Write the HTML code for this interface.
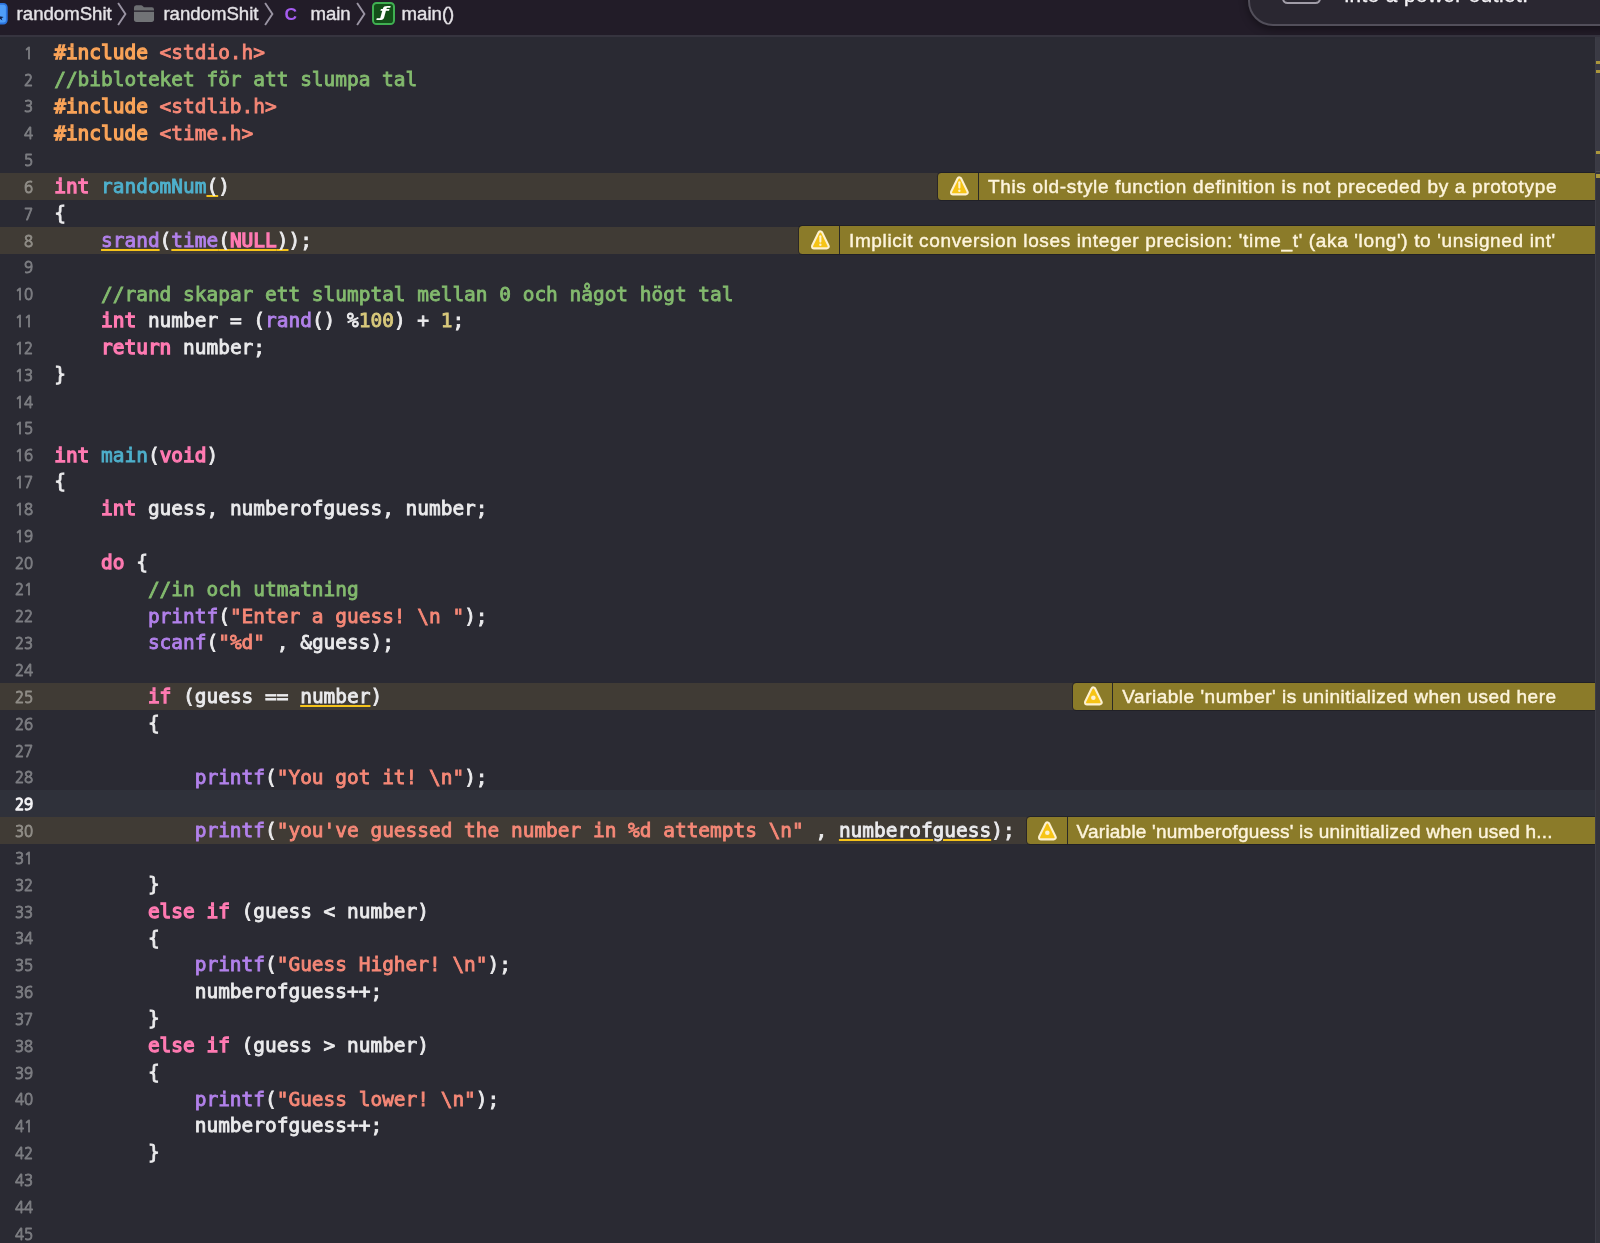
<!DOCTYPE html>
<html lang="en">
<head>
<meta charset="utf-8">
<title>main.c — randomShit</title>
<style>
html,body{margin:0;padding:0;}
body{width:1600px;height:1243px;overflow:hidden;background:#2a2a33;position:relative;font-family:"Liberation Sans",sans-serif;}
#barbg{position:absolute;left:0;top:0;width:1600px;height:35.4px;background:#221c28;}
#bar{position:absolute;left:0;top:0;width:1600px;height:35px;will-change:transform;}
#barline{position:absolute;left:0;top:35.4px;width:1600px;height:1.7px;background:#36343f;}
#bar .t{-webkit-text-stroke:0.4px;position:absolute;top:3px;font-size:18.6px;line-height:22px;color:#e4e2e6;white-space:nowrap;}
#bar svg{position:absolute;}
#bar .cc{color:#a55cf0;font-weight:bold;font-size:17.4px;top:3.2px;-webkit-text-stroke:0;}
.fbox{position:absolute;left:371.6px;top:1.7px;width:19.2px;height:19.2px;border:2px solid #40b052;border-radius:4.6px;background:#134f19;overflow:hidden;}
.fch{position:absolute;left:0;top:0;width:19.2px;text-align:center;font-family:"DejaVu Sans","Liberation Sans",sans-serif;font-style:oblique;font-weight:bold;font-size:13.8px;line-height:19.2px;color:#fff;transform:translate(0.5px,-1.1px) scaleX(1.5);}
#editor{position:absolute;left:0;top:36px;width:1600px;height:1207px;overflow:hidden;will-change:transform;}
.ln{position:absolute;left:0;width:1595px;height:26.84px;margin-top:-36px;}
.ln.w{background:#403b35;}
.ln.cur{background:#2f313a;}
.no{position:absolute;right:1562.1px;top:0.9px;line-height:27.4px;font-size:16.7px;color:#7b7c81;font-family:"NanumGothic","Liberation Sans",sans-serif;white-space:nowrap;-webkit-text-stroke:0.95px;transform:scaleX(0.9);transform-origin:100% 50%;}
.cur .no{color:#f2f2f4;-webkit-text-stroke:1.3px;}
.w .no{color:#8f8c86;}
.cd{position:absolute;left:54.2px;top:1.2px;-webkit-text-stroke:0.85px;margin:0;font-family:"DejaVu Sans Mono","Liberation Mono",monospace;font-size:19.467px;line-height:26.84px;color:#ebebed;white-space:pre;}
.cd b{font-weight:normal;-webkit-text-stroke:1.3px;}
.k{color:#ff7ab2;}
.p{color:#f9a358;}
.s{color:#f68877;}
.c{color:#83ba6e;}
.f{color:#b281eb;}
.d{color:#4eb0cc;}
.n{color:#d9c97c;}
.u{text-decoration:underline;text-decoration-color:#f5c31a;text-decoration-thickness:2.4px;text-underline-offset:2.2px;text-decoration-skip-ink:none;}
.u.g{text-decoration-skip-ink:auto;}
.wb{position:absolute;top:-0.4px;right:0;height:27.4px;background:#8b7b29;border-radius:3.5px 0 0 3.5px;box-shadow:0 0 0 1px rgba(24,24,30,.55);}
.wic{position:absolute;left:0;top:0;width:39.5px;height:100%;border-right:1.6px solid #2b2a26;}
.wi{position:absolute;left:9.4px;top:2.8px;}
.wt{position:absolute;left:49.6px;top:0.8px;line-height:27.4px;font-size:19px;color:#fdf4dc;white-space:nowrap;-webkit-text-stroke:0.45px;}
#sb{position:absolute;left:1595px;top:36.6px;width:5px;height:1207px;background:#33333c;border-left:1.4px solid #3c3c46;box-sizing:border-box;}
#sb b{position:absolute;left:0;top:0;width:5px;height:134px;background:#3a3a44;border-bottom:1.4px solid #484852;}
#sb i{position:absolute;left:0.2px;width:4px;height:3.4px;background:#ab973c;}
#note{position:absolute;left:1248.2px;top:-60px;width:420px;height:81.6px;border:2px solid #524f5a;border-radius:25px;background:#2a2731;overflow:hidden;box-shadow:0 3px 9px rgba(0,0,0,.4);}
.nic{position:absolute;left:31.6px;top:32.4px;width:35.2px;height:26px;border:2px solid #a19da8;border-radius:5.5px;}
.ntx{position:absolute;left:94.2px;top:40.8px;font-size:20.6px;line-height:24px;letter-spacing:0.5px;color:#f4f2f6;white-space:nowrap;-webkit-text-stroke:0.4px;}
</style>
</head>
<body>
<div id="barbg"></div>
<div id="bar">
<svg style="left:-16px;top:3px" width="24" height="22" viewBox="0 0 24 22"><rect x="0.9" y="0.9" width="21.9" height="19.6" rx="3.4" fill="#4f9ef8" stroke="#2c74de" stroke-width="1.8"/><path d="M15.5 13.2 L19.6 14.1 L17.6 15.2 L18.4 17.6 L15.6 15.6 Z" fill="#14224a"/></svg>
<span class="t" style="left:16.6px">randomShit</span>
<svg class="chev" style="left:116px;top:1px" width="12" height="26" viewBox="0 0 12 26"><path d="M2.1 2 L9.4 13 L2.1 24" fill="none" stroke="#9a94a3" stroke-width="1.9"/></svg>
<svg style="left:133.3px;top:4.4px" width="22.4" height="19.8" viewBox="0 0 23 19" preserveAspectRatio="none"><path d="M1 3.6 Q1 1.2 3.4 1.2 H8.2 Q9.4 1.2 10.2 2.1 L11.2 3.2 H19.4 Q21.6 3.2 21.6 5.4 V6.2 H1 Z" fill="#6c6e71"/><path d="M1 7.4 H21.6 V14.6 Q21.6 17.2 19 17.2 H3.6 Q1 17.2 1 14.6 Z" fill="#717376"/></svg>
<span class="t" style="left:163.4px">randomShit</span>
<svg class="chev" style="left:263px;top:1px" width="12" height="26" viewBox="0 0 12 26"><path d="M2.1 2 L9.4 13 L2.1 24" fill="none" stroke="#9a94a3" stroke-width="1.9"/></svg>
<span class="t cc" style="left:284.4px">C</span>
<span class="t" style="left:310.4px">main</span>
<svg class="chev" style="left:354.6px;top:1px" width="12" height="26" viewBox="0 0 12 26"><path d="M2.1 2 L9.4 13 L2.1 24" fill="none" stroke="#9a94a3" stroke-width="1.9"/></svg>
<span class="fbox"><span class="fch">ƒ</span></span>
<span class="t" style="left:401.6px">main()</span>
</div>
<div id="barline"></div>
<div id="editor">
<div class="ln" style="top:38.90px"><span class="no">1</span><pre class="cd"><b class="p">#include </b><span class="s">&lt;stdio.h&gt;</span></pre></div>
<div class="ln" style="top:65.73px"><span class="no">2</span><pre class="cd"><span class="c">//bibloteket för att slumpa tal</span></pre></div>
<div class="ln" style="top:92.57px"><span class="no">3</span><pre class="cd"><b class="p">#include </b><span class="s">&lt;stdlib.h&gt;</span></pre></div>
<div class="ln" style="top:119.41px"><span class="no">4</span><pre class="cd"><b class="p">#include </b><span class="s">&lt;time.h&gt;</span></pre></div>
<div class="ln" style="top:146.24px"><span class="no">5</span><pre class="cd"></pre></div>
<div class="ln w" style="top:173.08px"><span class="no">6</span><pre class="cd"><b class="k">int</b> <span class="d">randomNum</span><span class="u">(</span>)</pre><div class="wb" style="left:938.4px"><span class="wic"><svg class="wi" viewBox="0 0 22 22" width="22" height="22"><path d="M11.35 4.4 L17.7 17.4 H5 Z" fill="#fdf1cf" stroke="#fdf1cf" stroke-width="6" stroke-linejoin="round"/><path d="M11.35 4.4 L17.7 17.4 H5 Z" fill="#f6c416" stroke="#f6c416" stroke-width="1.9" stroke-linejoin="round"/><path d="M11.35 7.3 V12.6" stroke="#fdf1cf" stroke-width="2.1" stroke-linecap="round"/><circle cx="11.35" cy="15.7" r="1.2" fill="#fdf1cf"/></svg></span><span class="wt" style="letter-spacing:0.664px">This old-style function definition is not preceded by a prototype</span></div></div>
<div class="ln" style="top:199.91px"><span class="no">7</span><pre class="cd">{</pre></div>
<div class="ln w" style="top:226.75px"><span class="no">8</span><pre class="cd">    <span class="u"><span class="f">srand</span></span>(<span class="u"><span class="f">time</span>(<b class="k">NULL</b>)</span>);</pre><div class="wb" style="left:799.4px"><span class="wic"><svg class="wi" viewBox="0 0 22 22" width="22" height="22"><path d="M11.35 4.4 L17.7 17.4 H5 Z" fill="#fdf1cf" stroke="#fdf1cf" stroke-width="6" stroke-linejoin="round"/><path d="M11.35 4.4 L17.7 17.4 H5 Z" fill="#f6c416" stroke="#f6c416" stroke-width="1.9" stroke-linejoin="round"/><path d="M11.35 7.3 V12.6" stroke="#fdf1cf" stroke-width="2.1" stroke-linecap="round"/><circle cx="11.35" cy="15.7" r="1.2" fill="#fdf1cf"/></svg></span><span class="wt" style="letter-spacing:0.638px">Implicit conversion loses integer precision: &#x27;time_t&#x27; (aka &#x27;long&#x27;) to &#x27;unsigned int&#x27;</span></div></div>
<div class="ln" style="top:253.58px"><span class="no">9</span><pre class="cd"></pre></div>
<div class="ln" style="top:280.42px"><span class="no">10</span><pre class="cd">    <span class="c">//rand skapar ett slumptal mellan 0 och något högt tal</span></pre></div>
<div class="ln" style="top:307.25px"><span class="no">11</span><pre class="cd">    <b class="k">int</b> number = (<span class="f">rand</span>() %<span class="n">100</span>) + <span class="n">1</span>;</pre></div>
<div class="ln" style="top:334.08px"><span class="no">12</span><pre class="cd">    <b class="k">return</b> number;</pre></div>
<div class="ln" style="top:360.92px"><span class="no">13</span><pre class="cd">}</pre></div>
<div class="ln" style="top:387.75px"><span class="no">14</span><pre class="cd"></pre></div>
<div class="ln" style="top:414.59px"><span class="no">15</span><pre class="cd"></pre></div>
<div class="ln" style="top:441.43px"><span class="no">16</span><pre class="cd"><b class="k">int</b> <span class="d">main</span>(<b class="k">void</b>)</pre></div>
<div class="ln" style="top:468.26px"><span class="no">17</span><pre class="cd">{</pre></div>
<div class="ln" style="top:495.09px"><span class="no">18</span><pre class="cd">    <b class="k">int</b> guess, numberofguess, number;</pre></div>
<div class="ln" style="top:521.93px"><span class="no">19</span><pre class="cd"></pre></div>
<div class="ln" style="top:548.76px"><span class="no">20</span><pre class="cd">    <b class="k">do</b> {</pre></div>
<div class="ln" style="top:575.60px"><span class="no">21</span><pre class="cd">        <span class="c">//in och utmatning</span></pre></div>
<div class="ln" style="top:602.43px"><span class="no">22</span><pre class="cd">        <span class="f">printf</span>(<span class="s">&quot;Enter a guess! \n &quot;</span>);</pre></div>
<div class="ln" style="top:629.27px"><span class="no">23</span><pre class="cd">        <span class="f">scanf</span>(<span class="s">&quot;%d&quot;</span> , &amp;guess);</pre></div>
<div class="ln" style="top:656.11px"><span class="no">24</span><pre class="cd"></pre></div>
<div class="ln w" style="top:682.94px"><span class="no">25</span><pre class="cd">        <b class="k">if</b> (guess == <span class="u">number</span>)</pre><div class="wb" style="left:1072.7px"><span class="wic"><svg class="wi" viewBox="0 0 22 22" width="22" height="22"><path d="M11.35 4.4 L17.7 17.4 H5 Z" fill="#fdf1cf" stroke="#fdf1cf" stroke-width="6" stroke-linejoin="round"/><path d="M11.35 4.4 L17.7 17.4 H5 Z" fill="#f6c416" stroke="#f6c416" stroke-width="1.9" stroke-linejoin="round"/><circle cx="11.35" cy="12.7" r="2.3" fill="#fdf1cf"/></svg></span><span class="wt" style="letter-spacing:0.51px">Variable &#x27;number&#x27; is uninitialized when used here</span></div></div>
<div class="ln" style="top:709.77px"><span class="no">26</span><pre class="cd">        {</pre></div>
<div class="ln" style="top:736.61px"><span class="no">27</span><pre class="cd"></pre></div>
<div class="ln" style="top:763.45px"><span class="no">28</span><pre class="cd">            <span class="f">printf</span>(<span class="s">&quot;You got it! \n&quot;</span>);</pre></div>
<div class="ln cur" style="top:790.28px"><span class="no">29</span><pre class="cd"></pre></div>
<div class="ln w" style="top:817.12px"><span class="no">30</span><pre class="cd">            <span class="f">printf</span>(<span class="s">&quot;you&#x27;ve guessed the number in %d attempts \n&quot;</span> , <span class="u g">numberofguess</span>);</pre><div class="wb" style="left:1027px"><span class="wic"><svg class="wi" viewBox="0 0 22 22" width="22" height="22"><path d="M11.35 4.4 L17.7 17.4 H5 Z" fill="#fdf1cf" stroke="#fdf1cf" stroke-width="6" stroke-linejoin="round"/><path d="M11.35 4.4 L17.7 17.4 H5 Z" fill="#f6c416" stroke="#f6c416" stroke-width="1.9" stroke-linejoin="round"/><circle cx="11.35" cy="12.7" r="2.3" fill="#fdf1cf"/></svg></span><span class="wt" style="letter-spacing:0.214px">Variable &#x27;numberofguess&#x27; is uninitialized when used h...</span></div></div>
<div class="ln" style="top:843.95px"><span class="no">31</span><pre class="cd"></pre></div>
<div class="ln" style="top:870.78px"><span class="no">32</span><pre class="cd">        }</pre></div>
<div class="ln" style="top:897.62px"><span class="no">33</span><pre class="cd">        <b class="k">else</b> <b class="k">if</b> (guess &lt; number)</pre></div>
<div class="ln" style="top:924.46px"><span class="no">34</span><pre class="cd">        {</pre></div>
<div class="ln" style="top:951.29px"><span class="no">35</span><pre class="cd">            <span class="f">printf</span>(<span class="s">&quot;Guess Higher! \n&quot;</span>);</pre></div>
<div class="ln" style="top:978.12px"><span class="no">36</span><pre class="cd">            numberofguess++;</pre></div>
<div class="ln" style="top:1004.96px"><span class="no">37</span><pre class="cd">        }</pre></div>
<div class="ln" style="top:1031.80px"><span class="no">38</span><pre class="cd">        <b class="k">else</b> <b class="k">if</b> (guess &gt; number)</pre></div>
<div class="ln" style="top:1058.63px"><span class="no">39</span><pre class="cd">        {</pre></div>
<div class="ln" style="top:1085.47px"><span class="no">40</span><pre class="cd">            <span class="f">printf</span>(<span class="s">&quot;Guess lower! \n&quot;</span>);</pre></div>
<div class="ln" style="top:1112.30px"><span class="no">41</span><pre class="cd">            numberofguess++;</pre></div>
<div class="ln" style="top:1139.14px"><span class="no">42</span><pre class="cd">        }</pre></div>
<div class="ln" style="top:1165.97px"><span class="no">43</span><pre class="cd"></pre></div>
<div class="ln" style="top:1192.81px"><span class="no">44</span><pre class="cd"></pre></div>
<div class="ln" style="top:1219.64px"><span class="no">45</span><pre class="cd"></pre></div>
<div class="ln" style="top:1246.48px"><span class="no">46</span><pre class="cd"></pre></div>
</div>
<div id="sb"><b></b><i style="top:24px"></i><i style="top:33.4px"></i><i style="top:114.2px"></i><i style="top:137.8px"></i></div>
<div id="note"><div class="nic"></div><span class="ntx">into a power outlet.</span></div>
</body>
</html>
